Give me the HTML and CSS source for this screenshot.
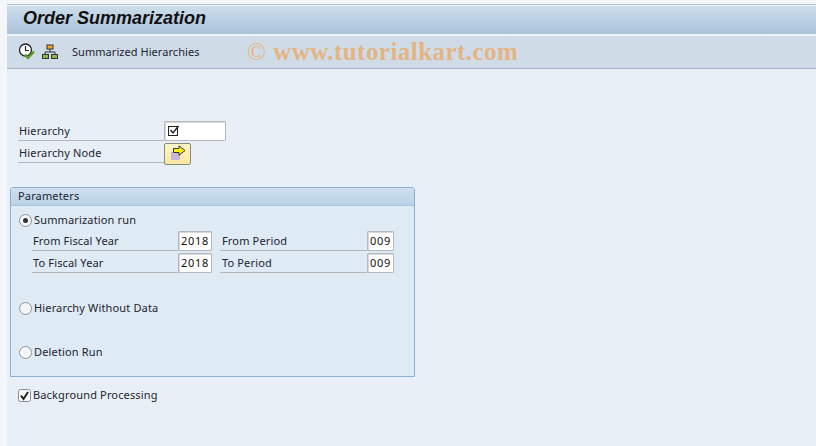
FILE: index.html
```html
<!DOCTYPE HTML>
<html>
<head>
	<title>Order Summarization</title>
	<meta http-equiv="Content-Type" content="text/html; charset=UTF-8">
	<link rel="stylesheet" href="styles.css">
</head>
<body>
	<div class="window">
		<div class="titlebar">Order Summarization</div>
		<div class="toolbar">
			<svg class="tool_icon" width="18" height="18" viewBox="0 0 18 18">
				<circle cx="7.5" cy="7" r="6" fill="#fff" stroke="#222" stroke-width="1.3"/>
				<path d="M7.5 3V7.5H11" fill="none" stroke="#222" stroke-width="1.2"/>
				<path d="M7 11.5L10 15L16 8.5" fill="none" stroke="#5a9a28" stroke-width="2.4"/>
			</svg>
			<svg class="tool_icon" width="16" height="16" viewBox="0 0 16 16">
				<rect x="5" y="1" width="6" height="4" fill="#f2a71b" stroke="#333" stroke-width="1"/>
				<path d="M8 5V8M3 11V8H13V11" fill="none" stroke="#333" stroke-width="1"/>
				<rect x="0.5" y="10.5" width="6" height="4" fill="#8cb84a" stroke="#333" stroke-width="1"/>
				<rect x="9.5" y="10.5" width="6" height="4" fill="#8cb84a" stroke="#333" stroke-width="1"/>
			</svg>
			<span class="tool_text">Summarized Hierarchies</span>
			<span class="watermark"><span class="copy">©</span> www.tutorialkart.com</span>
		</div>

		<div class="content">
			<div class="field_row">
				<label class="field_label">Hierarchy</label>
				<div class="input hierarchy_input">
					<svg width="13" height="13" viewBox="0 0 13 13">
						<rect x="1.5" y="2.5" width="9" height="9" fill="none" stroke="#222" stroke-width="1"/>
						<path d="M3.5 6L6 9L11.5 2" fill="none" stroke="#222" stroke-width="1.4"/>
					</svg>
				</div>
			</div>
			<div class="field_row">
				<label class="field_label">Hierarchy Node</label>
				<div class="select_btn">
					<svg width="18" height="16" viewBox="0 0 18 16">
						<rect x="2" y="7" width="9" height="8" fill="#c9b6d6"/>
						<path d="M4.5 3.5H10V0.8L16 5.5L10 10.2V7.5H4.5Z" fill="#fbee10" stroke="#333" stroke-width="1"/>
					</svg>
				</div>
			</div>

			<div class="group">
				<div class="group_head">Parameters</div>
				<div class="group_body">
					<div class="option">
						<span class="radio on"></span>Summarization run
					</div>
					<div class="period_grid">
						<label class="grid_label">From Fiscal Year</label>
						<div class="input num">2018</div>
						<label class="grid_label second">From Period</label>
						<div class="input num">009</div>
						<label class="grid_label">To Fiscal Year</label>
						<div class="input num">2018</div>
						<label class="grid_label second">To Period</label>
						<div class="input num">009</div>
					</div>
					<div class="option spaced">
						<span class="radio"></span>Hierarchy Without Data
					</div>
					<div class="option spaced">
						<span class="radio"></span>Deletion Run
					</div>
				</div>
			</div>

			<div class="check_row">
				<svg class="check" width="13" height="13" viewBox="0 0 13 13">
					<rect x="0.5" y="0.5" width="12" height="12" rx="2" fill="#f7f9fb" stroke="#8b8f94"/>
					<path d="M3 6.5L5.5 10L10 3" fill="none" stroke="#222" stroke-width="2"/>
				</svg>
				Background Processing
			</div>
		</div>
	</div>
</body>
</html>
```

FILE: styles.css
```css
html, body {
	margin: 0;
	height: 100%;
}

body {
	background-color: #f4f6fa;
	font-family: "Noto Sans", "Open Sans", sans-serif;
	font-size: 11px;
	letter-spacing: 0.15px;
	color: #1c2530;
	overflow: hidden;
}

.window {
	margin-left: 7px;
	padding-top: 4px;
	height: 446px;
	box-sizing: border-box;
	display: flex;
	flex-direction: column;
}

.titlebar {
	height: 29px;
	line-height: 27px;
	border-top: 1px solid #b5bfcc;
	border-bottom: 2px solid #eef4fa;
	padding-left: 16px;
	background: linear-gradient(#cfdfec, #a9c1da);
	box-shadow: inset 0 1px 0 #eef4fa;
	font-family: "Liberation Sans", sans-serif;
	font-size: 18px;
	font-weight: bold;
	font-style: italic;
	letter-spacing: 0;
	color: #111;
}

.toolbar {
	height: 32px;
	display: flex;
	align-items: center;
	background-color: #cfdce8;
	border-bottom: 1px solid #a6b6c8;
}

.tool_icon {
	margin-left: 11px;
}

.tool_icon + .tool_icon {
	margin-left: 6px;
}

.tool_text {
	margin-left: 14px;
	width: 175px;
	padding-bottom: 2px;
	letter-spacing: 0.05px;
	white-space: nowrap;
}

.watermark {
	font-family: "Liberation Serif", serif;
	font-size: 25px;
	font-weight: bold;
	color: #e5b483;
	white-space: nowrap;
	letter-spacing: 0.45px;
}

.copy {
	font-weight: normal;
}

.content {
	flex: 1;
	background-color: #e8eff7;
	padding: 52px 0 0 3px;
}

.field_row {
	display: flex;
	height: 22px;
	margin-left: 8px;
}

.field_label {
	width: 146px;
	height: 20px;
	line-height: 19px;
	padding-left: 1px;
	box-sizing: border-box;
	border-bottom: 1px solid #b5b8bb;
}

.input {
	box-sizing: border-box;
	background-color: #fff;
	border: 1px solid #b5b9bd;
	border-radius: 1px;
	height: 20px;
	box-shadow: inset 1px 1px 0 #d8d8d8;
}

.hierarchy_input {
	width: 62px;
	padding: 2px 0 0 2px;
}

.hierarchy_input svg {
	display: block;
}

.select_btn {
	width: 27px;
	height: 22px;
	box-sizing: border-box;
	border: 1px solid #8a8a7a;
	border-radius: 2px;
	background: linear-gradient(#fff5c8, #fbe7a0);
	padding: 1px 0 0 4px;
}

.select_btn svg {
	display: block;
}

.group {
	margin-top: 22px;
	width: 405px;
	box-sizing: border-box;
	border: 1px solid #8eb0d0;
	border-radius: 3px 3px 0 0;
	background-color: #deeaf4;
}

.group_head {
	height: 17px;
	line-height: 16px;
	padding-left: 7px;
	background: linear-gradient(#cfe0ef, #bad2e7);
	border-bottom: 1px solid #a9c3da;
}

.group_body {
	height: 166px;
	padding: 4px 0 0 8px;
}

.option {
	display: flex;
	align-items: center;
	height: 20px;
	line-height: 18px;
}

.option.spaced {
	margin-top: 24px;
}

.radio {
	width: 11px;
	height: 11px;
	margin-right: 2px;
	border: 1px solid #8d9297;
	border-radius: 50%;
	background-color: #f4f7fa;
	display: flex;
	align-items: center;
	justify-content: center;
}

.radio.on::after {
	content: "";
	width: 5px;
	height: 5px;
	border-radius: 50%;
	background-color: #333;
}

.period_grid {
	display: grid;
	grid-template-columns: 146px 34px 155px 27px;
	grid-auto-rows: 20px;
	row-gap: 2px;
	margin: 1px 0 25px 13px;
	width: 362px;
}

.grid_label {
	box-sizing: border-box;
	height: 20px;
	line-height: 19px;
	padding-left: 1px;
	border-bottom: 1px solid #b5b8bb;
}

.grid_label.second {
	margin-left: 8px;
	padding-left: 2px;
}

.num {
	font-size: 11px;
	letter-spacing: 0.7px;
	line-height: 18px;
	text-align: center;
	color: #111;
}

.check_row {
	display: flex;
	align-items: center;
	margin: 8px 0 0 8px;
	height: 20px;
	line-height: 18px;
}

.check {
	margin-right: 2px;
}
```
